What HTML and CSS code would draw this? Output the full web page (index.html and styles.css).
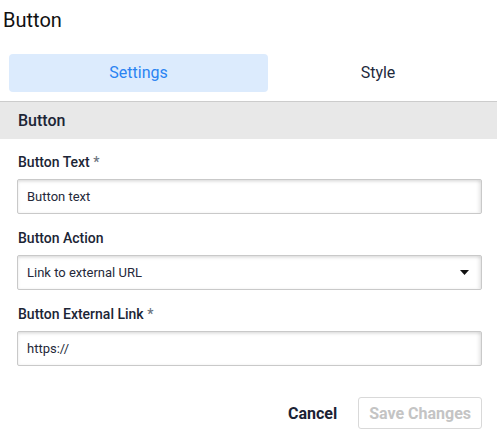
FILE: index.html
```html
<!DOCTYPE html>
<html>
<head>
<meta charset="utf-8">
<link rel="stylesheet" href="styles.css">
</head>
<body>
<div class="modal">
  <h1 class="title">Button</h1>
  <div class="tabs">
    <div class="tab active">Settings</div>
    <div class="tab">Style</div>
  </div>
  <div class="section-head">Button</div>
  <div class="form">
    <div class="field">
      <div class="label">Button Text <span class="req">*</span></div>
      <div class="input">Button text</div>
    </div>
    <div class="field">
      <div class="label">Button Action</div>
      <div class="input select">
        <span>Link to external URL</span>
        <svg class="arrow" width="9" height="5" viewBox="0 0 9 5"><path d="M0 0H9L4.5 5Z" fill="#111"/></svg>
      </div>
    </div>
    <div class="field">
      <div class="label">Button External Link <span class="req">*</span></div>
      <div class="input">https://</div>
    </div>
  </div>
  <div class="footer">
    <button class="btn cancel">Cancel</button>
    <button class="btn save">Save Changes</button>
  </div>
</div>
</body>
</html>
```

FILE: styles.css
```css
html, body {
  margin: 0;
  padding: 0;
  background: #ffffff;
}
body {
  font-family: Roboto, "Liberation Sans", sans-serif;
  color: #1e2638;
}
.modal {
  width: 497px;
}
.title {
  margin: 0;
  padding: 8px 0 0 3px;
  font-size: 20px;
  line-height: 24px;
  font-weight: 400;
  color: #111111;
}
.tabs {
  display: grid;
  grid-template-columns: 259px 1fr;
  margin-top: 22px;
  padding: 0 9px;
}
.tab {
  height: 38px;
  line-height: 38px;
  text-align: center;
  font-size: 16px;
  color: #1e2a3d;
  border-radius: 4px;
}
.tab.active {
  background: #dcebfd;
  color: #2a83f2;
}
.section-head {
  margin-top: 9px;
  border-top: 1px solid #cccccc;
  background: #e8e8e8;
  padding: 9px 18px 9px;
  font-size: 16px;
  line-height: 19px;
  font-weight: 500;
  color: #1c2536;
}
.form {
  padding: 13px 15px 0 17px;
  display: flex;
  flex-direction: column;
  gap: 14px;
}
.label {
  font-size: 14px;
  line-height: 20px;
  font-weight: 500;
  color: #1c2536;
  margin-bottom: 7px;
  padding-left: 1px;
}
.req {
  color: #6d7480;
}
.input {
  box-sizing: border-box;
  height: 35px;
  border: 1px solid #c9c9c9;
  border-radius: 2px;
  box-shadow: inset 0 2px 3px rgba(0,0,0,0.10), inset -3px 0 3px rgba(0,0,0,0.06);
  padding: 0 9px;
  font-size: 13px;
  line-height: 33px;
  color: #25293a;
}
.select {
  display: flex;
  justify-content: space-between;
  align-items: center;
  padding-right: 12px;
}
.arrow {
  display: block;
}
.footer {
  display: flex;
  justify-content: flex-end;
  align-items: center;
  gap: 11px;
  margin-top: 31px;
  padding-right: 15px;
}
.btn {
  font-family: Roboto, "Liberation Sans", sans-serif;
  font-size: 16px;
  font-weight: 700;
  height: 32px;
  box-sizing: border-box;
  background: #ffffff;
  margin: 0;
}
.cancel {
  border: none;
  padding: 0 10px;
  color: #1b2234;
}
.save {
  border: 1px solid #d9d9d9;
  border-radius: 3px;
  padding: 0 10px;
  color: #c4c4c4;
}
```
